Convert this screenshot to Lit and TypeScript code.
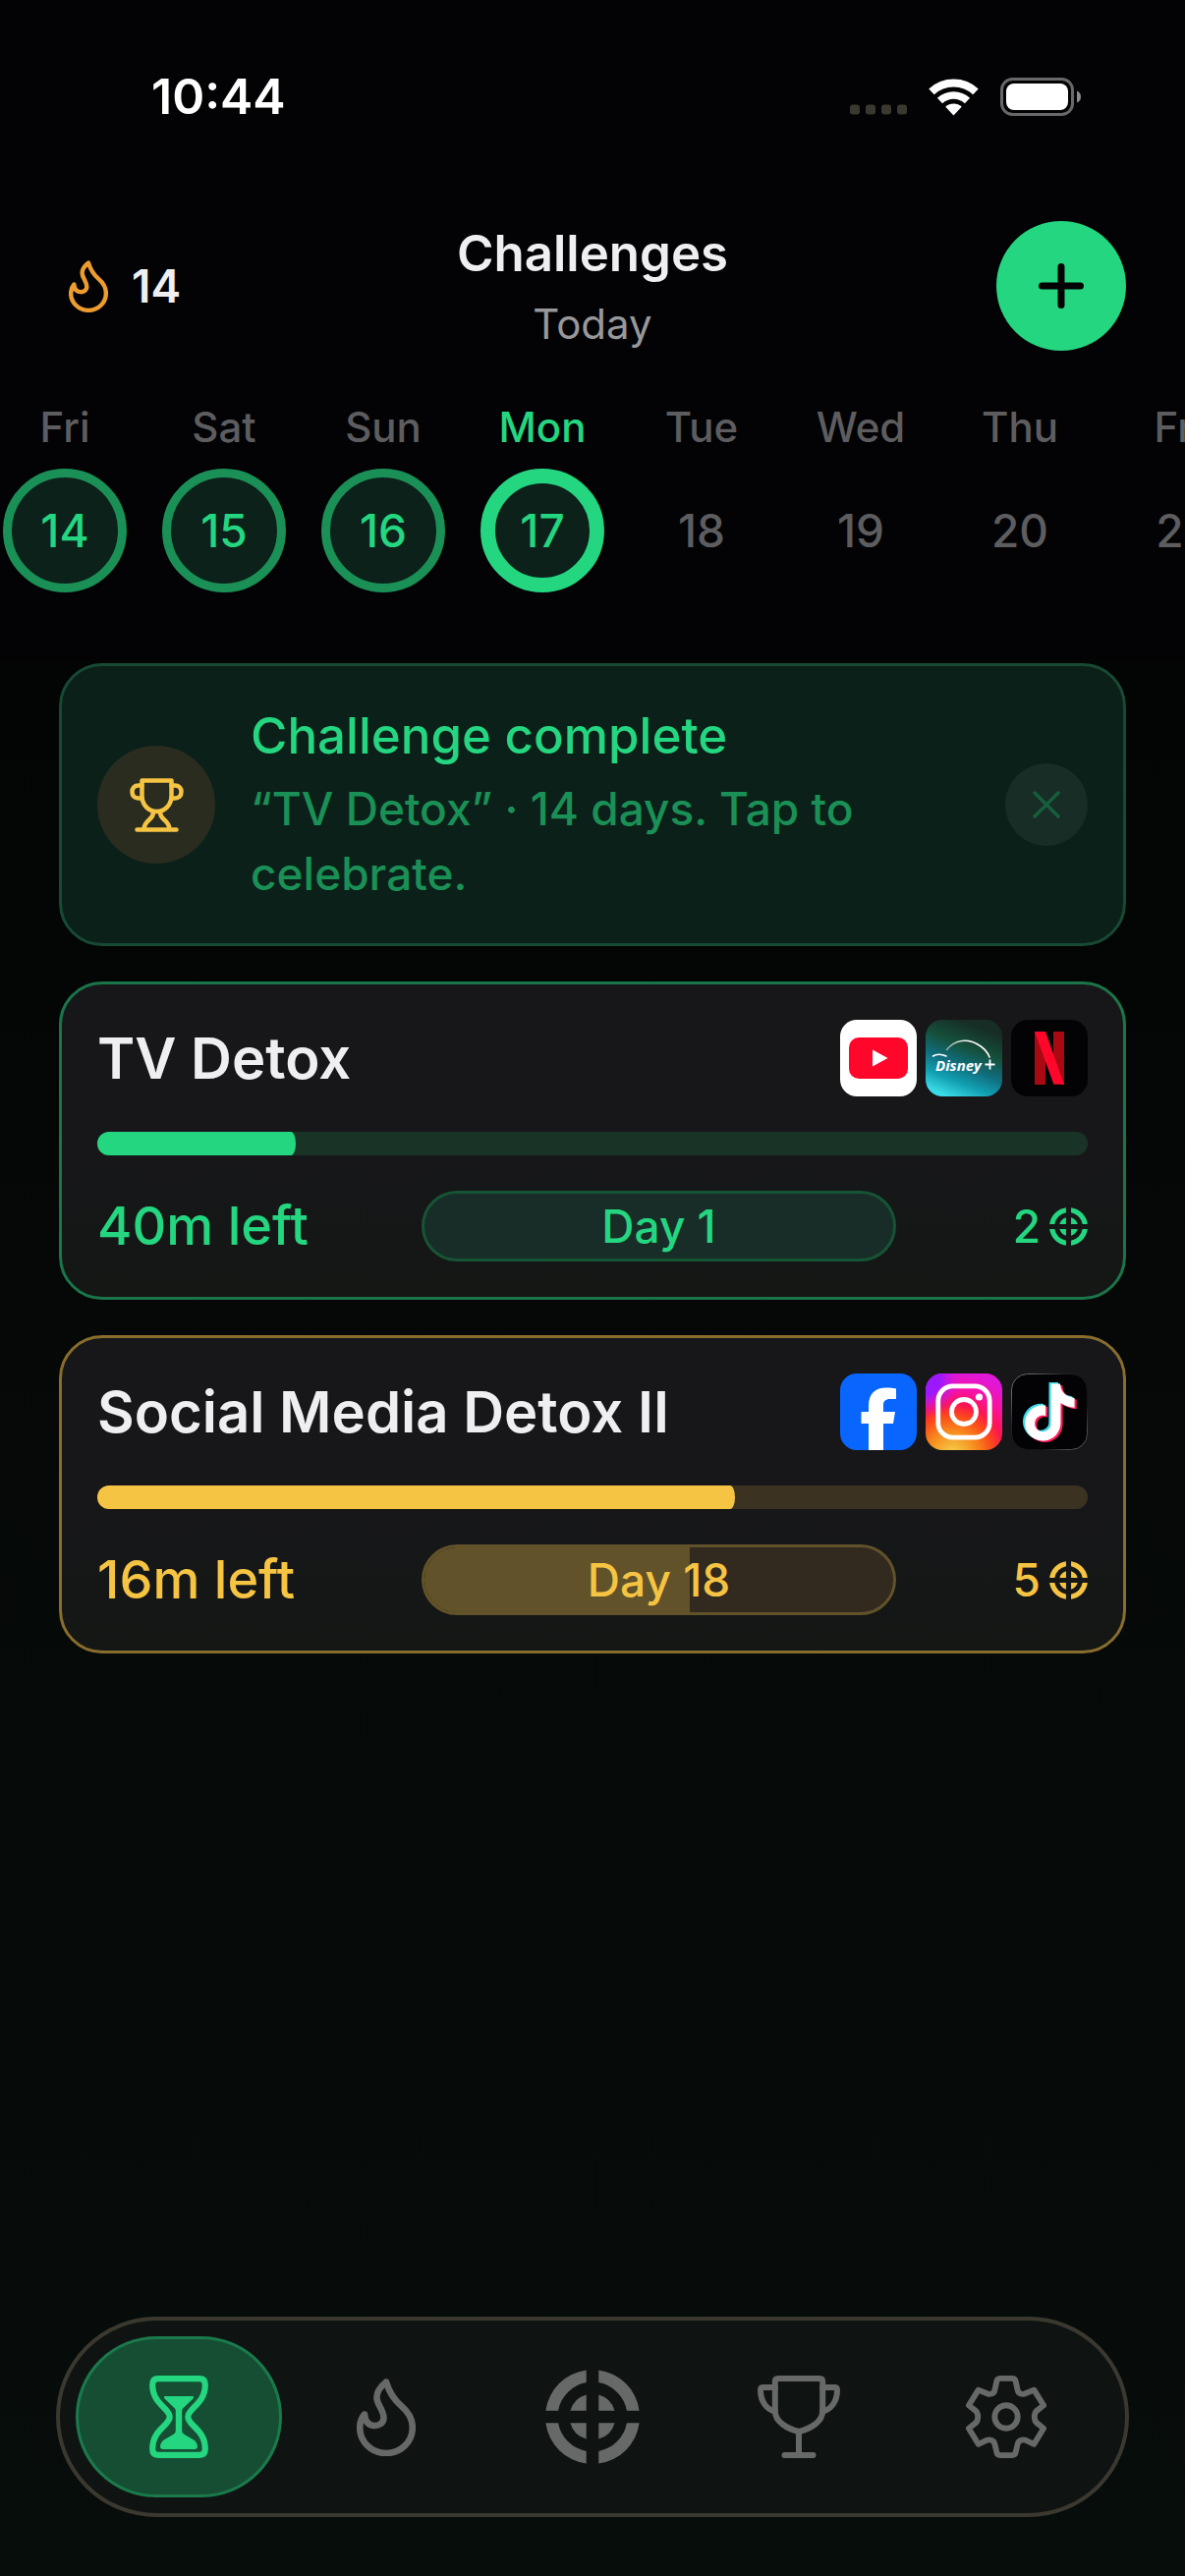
import { LitElement, html, svg, css, nothing } from "lit";
import { customElement, property, state } from "lit/decorators.js";
import { classMap } from "lit/directives/class-map.js";
import { styleMap } from "lit/directives/style-map.js";

/* ---------- icons ---------- */

const flameIcon = html`<svg class="glyph" viewBox="0 0 60 79" aria-hidden="true">
  <path
    d="M30 3.500C25 7.500 20 12.500 20.500 20C21 27 27.500 32 27.500 40C27.500 45.500 22.500 48.300 17.500 48C11.500 47.600 8.600 43 8 36.500C4.500 40.500 3.200 45 3.200 50C3.200 64.500 15 76 30 76C45 76 56.800 64.500 56.800 50C56.800 41 52 33.500 45.500 28C38 21.500 33 14 30 3.500Z"
    fill="none" stroke="currentColor" stroke-width="6.600" stroke-linejoin="round" />
</svg>`;

const quadrant =
  "M6.300 -47.600A48 48 0 0 1 47.600 -6.300H34.900A35.500 35.500 0 0 0 6.300 -34.900ZM6.300 -22.600A23.500 23.500 0 0 1 22.600 -6.300H6.300Z";

const targetIcon = html`<svg class="glyph" viewBox="-48 -48 96 96" aria-hidden="true">
  ${[0, 90, 180, 270].map(
    (a) => svg`<path d=${quadrant} transform="rotate(${a})" fill="currentColor" />`
  )}
</svg>`;

const hourglassIcon = html`<svg class="glyph" viewBox="0 0 60 84" aria-hidden="true">
  <path
    d="M9 3.200H51Q56.800 3.200 56.800 9.500C56.800 29 39.300 33 39.300 42S56.800 55 56.800 74.500Q56.800 80.800 51 80.800H9Q3.200 80.800 3.200 74.500C3.200 55 20.700 51 20.700 42S3.200 29 3.200 9.500Q3.200 3.200 9 3.200Z"
    fill="none" stroke="currentColor" stroke-width="6.200" />
  <path
    d="M16 21H44Q46 21 44.500 23.500L34 33.500Q33.200 34.300 33.200 36V56Q33.200 58 35 59.500L46 66Q49 69 49 72Q49 75 46 75H14Q11 75 11 72Q11 69 14 66L25 59.500Q26.800 58 26.800 56V36Q26.800 34.300 26 33.500L15.500 23.500Q14 21 16 21Z"
    fill="currentColor" />
</svg>`;

const cupIcon = html`<svg class="glyph" viewBox="0 0 84 84" aria-hidden="true">
  <g fill="none" stroke="currentColor" stroke-width="6" stroke-linecap="round" stroke-linejoin="round">
    <path d="M21 3H63Q66.200 3 66.200 6V36C66.200 47 54 54 42 57C30 54 17.800 47 17.800 36V6Q17.800 3 21 3Z" />
    <path d="M17.800 12H5Q3 12 3 15C3 26 9 34.500 17.800 36.500" />
    <path d="M66.200 12H79Q81 12 81 15C81 26 75 34.500 66.200 36.500" />
    <path d="M42 57V80M27.500 81H56.500" />
  </g>
</svg>`;

const gearIcon = html`<svg class="glyph" viewBox="0 0 84 86" aria-hidden="true">
  <g fill="none" stroke="currentColor" stroke-width="6" stroke-linejoin="round">
    <path
      d="M36 3H48Q51.500 3 52 6.500L54 15.500Q54.500 18 57 18.800Q60 20 62.500 18.500L71 15 81 31 73.500 37Q71.500 39 71.500 43Q71.500 47 73.500 49L81 55 71 71.500 62.500 67.500Q60 66.300 57 67.500Q54.500 68.500 54 71L52 79.500Q51.500 83 48 83H36Q32.500 83 32 79.500L30 71Q29.500 68.500 27 67.500Q24 66.300 21.500 67.500L13 71.500 3 55 10.500 49Q12.500 47 12.500 43Q12.500 39 10.500 37L3 31 13 15 21.500 18.500Q24 20 27 18.800Q29.500 18 30 15.500L32 6.500Q32.500 3 36 3Z" />
    <circle cx="42" cy="43" r="12" />
  </g>
</svg>`;

const awardIcon = html`<svg class="award" viewBox="0 0 55 55" aria-hidden="true">
  <g fill="none" stroke="currentColor" stroke-width="4.500" stroke-linecap="round" stroke-linejoin="round">
    <path d="M12.500 2.500H42.500V18C42.500 27 36 34 27.500 34S12.500 27 12.500 18Z" />
    <path d="M12.500 7.500H9C4.800 7.500 2.500 10 2.500 14S4.800 20.500 9 20.500H12.500" />
    <path d="M42.500 7.500H46C50.200 7.500 52.500 10 52.500 14S50.200 20.500 46 20.500H42.500" />
    <path d="M24 35C24 43 15 42 14.500 52M31 35C31 43 40 42 40.500 52M7.500 52.500H47.500" />
  </g>
</svg>`;

const plusIcon = html`<svg class="plus" viewBox="0 0 46 46" aria-hidden="true">
  <path d="M23 3.500V42.500M3.500 23H42.500" stroke="currentColor" stroke-width="7" stroke-linecap="round" />
</svg>`;

const closeIcon = html`<svg class="cross" viewBox="0 0 28 28" aria-hidden="true">
  <path d="M2 2L26 26M26 2L2 26" stroke="currentColor" stroke-width="3.500" stroke-linecap="round" />
</svg>`;

const notePath =
  "M12.525.02c1.31-.02 2.61-.01 3.91-.02.08 1.53.63 3.09 1.75 4.17 1.12 1.11 2.7 1.62 4.24 1.79v4.03c-1.44-.05-2.89-.35-4.2-.97-.57-.26-1.1-.59-1.62-.93-.01 2.92.01 5.84-.02 8.75-.08 1.4-.54 2.79-1.35 3.94-1.31 1.92-3.58 3.17-5.91 3.21-1.43.08-2.86-.31-4.08-1.03-2.02-1.19-3.44-3.37-3.65-5.71-.02-.5-.03-1-.01-1.49.18-1.9 1.12-3.72 2.58-4.96 1.66-1.44 3.98-2.13 6.15-1.72.02 1.48-.04 2.96-.04 4.44-.99-.32-2.15-.23-3.02.37-.63.41-1.11 1.04-1.36 1.75-.21.51-.15 1.07-.14 1.61.24 1.64 1.82 3.02 3.5 2.87 1.12-.01 2.19-.66 2.77-1.61.19-.33.4-.67.41-1.06.1-1.79.06-3.57.07-5.36.01-4.03-.01-8.05.02-12.07z";

const appLogos: Record<string, unknown> = {
  YouTube: html`<svg class="app" viewBox="0 0 78 78" role="img" aria-label="YouTube">
    <rect width="78" height="78" fill="#fff" />
    <rect x="9" y="18" width="60" height="42" rx="10" fill="#fe072b" />
    <path d="M33 30.500L48.500 39 33 47.500Z" fill="#fff" />
  </svg>`,
  Disney: html`<svg class="app" viewBox="0 0 78 78" role="img" aria-label="Disney+">
    <defs>
      <linearGradient id="sea" x1="0.7" y1="0" x2="0.3" y2="1">
        <stop offset="0.080" stop-color="#172d26" />
        <stop offset="0.350" stop-color="#154f3a" />
        <stop offset="0.600" stop-color="#106f80" />
        <stop offset="0.800" stop-color="#11a0b2" />
        <stop offset="1" stop-color="#3adbe8" />
      </linearGradient>
      <linearGradient id="trail" x1="0" x2="1">
        <stop offset="0" stop-color="#fff" stop-opacity="0.500" />
        <stop offset="0.500" stop-color="#fff" />
      </linearGradient>
    </defs>
    <rect width="78" height="78" fill="url(#sea)" />
    <path d="M21.500 30.500C30 20 43 19 53 25Q62 30 65 38" fill="none" stroke="url(#trail)" stroke-width="1.600" stroke-linecap="round" />
    <path d="M7.500 37Q13 33.500 21 37" fill="none" stroke="#fff" stroke-width="1.600" stroke-linecap="round" />
    <text x="10" y="51.500" class="wordmark" fill="#fff">Disney</text>
    <path d="M60.500 45.500H70.500M65.500 40.500V50.500" stroke="#fff" stroke-width="1.800" />
  </svg>`,
  Netflix: html`<svg class="app" viewBox="0 0 78 78" role="img" aria-label="Netflix">
    <rect width="78" height="78" fill="#030305" />
    <rect x="24" y="12" width="11" height="54" fill="#a90912" />
    <rect x="43" y="12" width="11" height="54" fill="#a90912" />
    <path d="M24 12H35L54 66Q49 65 43 64.800Z" fill="#fe072b" />
  </svg>`,
  Facebook: html`<svg class="app" viewBox="0 0 78 78" role="img" aria-label="Facebook">
    <rect width="78" height="78" fill="#0866ff" />
    <path
      d="M29 78V51H21.500V39H29V33C29 20 36 14.500 47 14.500C51 14.500 54 14.800 57 15.500V26H51C46 26 44 28.500 44 32V39H56L54 51H44V78Z"
      fill="#fff" />
  </svg>`,
  Instagram: html`<svg class="app" viewBox="0 0 78 78" role="img" aria-label="Instagram">
    <defs>
      <radialGradient id="warm" cx="0.350" cy="1.080" r="1.100">
        <stop offset="0.080" stop-color="#f5c542" />
        <stop offset="0.300" stop-color="#f78a1c" />
        <stop offset="0.480" stop-color="#fb4a1a" />
        <stop offset="0.620" stop-color="#fd1550" />
        <stop offset="0.780" stop-color="#f912a0" />
        <stop offset="1" stop-color="#e018d8" />
      </radialGradient>
      <radialGradient id="cool" cx="0" cy="0.080" r="0.480">
        <stop offset="0.400" stop-color="#9c18ff" />
        <stop offset="1" stop-color="#d818e0" stop-opacity="0" />
      </radialGradient>
    </defs>
    <rect width="78" height="78" fill="url(#warm)" />
    <rect width="78" height="78" fill="url(#cool)" />
    <g fill="none" stroke="#fff">
      <rect x="12.800" y="12.800" width="52.400" height="52.400" rx="15" stroke-width="4.800" />
      <circle cx="39" cy="39" r="12.500" stroke-width="4.800" />
    </g>
    <circle cx="54.500" cy="24" r="3.600" fill="#fff" />
  </svg>`,
  TikTok: html`<svg class="app" viewBox="0 0 78 78" role="img" aria-label="TikTok">
    <defs>
      <linearGradient id="edge" x1="0" y1="0" x2="1" y2="1">
        <stop offset="0" stop-color="#8a8a8c" />
        <stop offset="0.350" stop-color="#222224" />
        <stop offset="0.700" stop-color="#111113" />
        <stop offset="1" stop-color="#77777a" />
      </linearGradient>
    </defs>
    <rect x="0.500" y="0.500" width="77" height="77" rx="16" fill="#030305" stroke="url(#edge)" />
    <path d=${notePath} transform="translate(8.200 9) scale(2.420)" fill="#3adbe8" />
    <path d=${notePath} transform="translate(12.400 12) scale(2.420)" fill="#fe1b5a" />
    <path d=${notePath} transform="translate(10.300 10.500) scale(2.420)" fill="#fff" />
  </svg>`,
};

/* ---------- challenge card ---------- */

interface Challenge {
  name: string;
  tone: "green" | "gold";
  apps: string[];
  left: string;
  progress: number;
  day: number;
  dayProgress: number;
  points: number;
}

@customElement("challenge-card")
export class ChallengeCard extends LitElement {
  @property({ attribute: false }) challenge!: Challenge;

  static styles = css`
    :host {
      display: block;
    }
    .card {
      --tone: #24d680;
      --edge: #1a754a;
      --track: #193427;
      --pill: #182d27;
      --pill-edge: #165436;
      --pill-fill: #165436;
      display: flex;
      flex-direction: column;
      gap: 36px;
      padding: 36px;
      border: 3px solid var(--edge);
      border-radius: 44px;
      background: linear-gradient(#17171a 50%, #141714);
      color: var(--tone);
    }
    .card.gold {
      --tone: #f6c443;
      --edge: #896d2d;
      --track: #3b3222;
      --pill: #32291f;
      --pill-edge: #615229;
      --pill-fill: #615229;
    }
    .top {
      display: flex;
      align-items: center;
      justify-content: space-between;
      gap: 24px;
    }
    .name {
      margin: 0;
      font-size: 58px;
      line-height: 72px;
      font-weight: 600;
      color: #efeff1;
    }
    .apps {
      display: flex;
      gap: 9px;
    }
    .app {
      display: block;
      width: 78px;
      height: 78px;
      border-radius: 17px;
    }
    .wordmark {
      font: italic 700 15px "Open Sans", sans-serif;
    }
    .track {
      height: 24px;
      border-radius: 12px;
      overflow: hidden;
      background: var(--track);
    }
    .bar {
      height: 100%;
      border-radius: 0 5px 5px 0 / 0 12px 12px 0;
      background: var(--tone);
    }
    .bottom {
      display: grid;
      grid-template-columns: 330fr 483fr 195fr;
      align-items: center;
    }
    .left {
      font-size: 54px;
      line-height: 60px;
      font-weight: 500;
    }
    .day {
      position: relative;
      overflow: hidden;
      border: 3px solid var(--pill-edge);
      border-radius: 36px;
      background: var(--pill);
      text-align: center;
      font-size: 46px;
      line-height: 66px;
      font-weight: 500;
    }
    .day-fill {
      position: absolute;
      inset: 0 auto 0 0;
      background: var(--pill-fill);
    }
    .day-text {
      position: relative;
    }
    .points {
      display: flex;
      align-items: center;
      justify-content: flex-end;
      gap: 9px;
      font-size: 46px;
      line-height: 60px;
      font-weight: 500;
    }
    .glyph {
      display: block;
      width: 39px;
      height: 39px;
    }
  `;

  render() {
    const c = this.challenge;
    return html`<article class="card ${c.tone}">
      <div class="top">
        <h2 class="name">${c.name}</h2>
        <div class="apps">${c.apps.map((a) => appLogos[a])}</div>
      </div>
      <div class="track" role="progressbar" aria-label="Time left" aria-valuenow=${c.progress} aria-valuemin="0" aria-valuemax="100">
        <div class="bar" style=${styleMap({ width: `${c.progress}%` })}></div>
      </div>
      <div class="bottom">
        <span class="left">${c.left}</span>
        <div class="day">
          ${c.dayProgress > 0
            ? html`<div class="day-fill" style=${styleMap({ width: `${c.dayProgress}%` })}></div>`
            : nothing}
          <span class="day-text">Day ${c.day}</span>
        </div>
        <div class="points"><span>${c.points}</span>${targetIcon}</div>
      </div>
    </article>`;
  }
}

/* ---------- app ---------- */

interface Day {
  name: string;
  date: number;
  status: "done" | "today" | "future";
}

@customElement("app-root")
export class AppRoot extends LitElement {
  @state() private bannerOpen = true;

  private days: Day[] = [
    { name: "Fri", date: 14, status: "done" },
    { name: "Sat", date: 15, status: "done" },
    { name: "Sun", date: 16, status: "done" },
    { name: "Mon", date: 17, status: "today" },
    { name: "Tue", date: 18, status: "future" },
    { name: "Wed", date: 19, status: "future" },
    { name: "Thu", date: 20, status: "future" },
    { name: "Fri", date: 21, status: "future" },
  ];

  private challenges: Challenge[] = [
    {
      name: "TV Detox",
      tone: "green",
      apps: ["YouTube", "Disney", "Netflix"],
      left: "40m left",
      progress: 20,
      day: 1,
      dayProgress: 0,
      points: 2,
    },
    {
      name: "Social Media Detox II",
      tone: "gold",
      apps: ["Facebook", "Instagram", "TikTok"],
      left: "16m left",
      progress: 64.4,
      day: 18,
      dayProgress: 56.6,
      points: 5,
    },
  ];

  private tabs = [
    { label: "Challenges", id: "challenges", icon: hourglassIcon },
    { label: "Streak", id: "streak", icon: flameIcon },
    { label: "Focus", id: "focus", icon: targetIcon },
    { label: "Awards", id: "awards", icon: cupIcon },
    { label: "Settings", id: "settings", icon: gearIcon },
  ];

  static styles = css`
    :host {
      display: flex;
      flex-direction: column;
      min-height: 100vh;
      overflow: hidden;
      box-sizing: border-box;
      background: linear-gradient(#030404 25%, #050807 50%, #070d0b);
      color: #efeff1;
      font-family: Inter, "Liberation Sans", sans-serif;
    }
    .head {
      padding-bottom: 69px;
      background: #030305;
    }
    .status {
      display: flex;
      align-items: center;
      justify-content: space-between;
      padding: 68px 106px 91px 154px;
    }
    .clock {
      font-size: 50px;
      line-height: 60px;
      font-weight: 600;
      color: #fff;
    }
    .signals {
      display: flex;
      align-items: center;
      gap: 22px;
    }
    .signals svg {
      display: block;
      height: 39px;
    }
    .dots {
      width: 58px;
    }
    .wifi {
      width: 51px;
    }
    .battery {
      width: 82px;
    }
    .bar {
      display: grid;
      grid-template-columns: 1fr auto 1fr;
      align-items: center;
      padding: 0 60px;
    }
    .streak {
      display: flex;
      align-items: center;
      gap: 24px;
      padding-left: 10px;
      font-size: 46px;
      line-height: 60px;
      font-weight: 600;
    }
    .streak .glyph {
      display: block;
      width: 40px;
      height: 53px;
      color: #ed9d2d;
    }
    .titles {
      text-align: center;
    }
    .title {
      margin: 0;
      font-size: 51px;
      line-height: 78px;
      font-weight: 600;
    }
    .subtitle {
      margin: 0;
      font-size: 42px;
      line-height: 66px;
      color: #98989b;
    }
    button {
      display: grid;
      place-items: center;
      padding: 0;
      border: 0;
      border-radius: 50%;
      font: inherit;
      cursor: pointer;
    }
    .add {
      justify-self: end;
      width: 132px;
      height: 132px;
      background: #24d680;
      color: #030305;
    }
    .plus {
      width: 46px;
      height: 46px;
    }
    .week {
      display: flex;
      gap: 36px;
      margin: 42px 0 0;
      padding: 0 0 0 3px;
      list-style: none;
      overflow: hidden;
    }
    .day {
      flex: 0 0 126px;
      display: flex;
      flex-direction: column;
      align-items: center;
      gap: 12px;
      color: #5d5d5f;
      font-weight: 500;
    }
    .day-name {
      font-size: 42px;
      line-height: 60px;
    }
    .day-date {
      box-sizing: border-box;
      display: grid;
      place-items: center;
      width: 126px;
      height: 126px;
      border: 9px solid transparent;
      border-radius: 50%;
      font-size: 46px;
      line-height: 60px;
    }
    .done .day-date {
      border-color: #1a9056;
      background: #0b2119;
      color: #24d680;
    }
    .today {
      color: #24d680;
    }
    .today .day-date {
      border-width: 15px;
      border-color: #24d680;
      background: #0b2119;
    }
    .list {
      display: flex;
      flex-direction: column;
      gap: 36px;
      padding: 3px 60px 60px;
    }
    .banner {
      display: flex;
      align-items: center;
      gap: 36px;
      padding: 38px 36px;
      border: 3px solid #174a34;
      border-radius: 44px;
      background: #0b2018;
    }
    .medal {
      flex: none;
      display: grid;
      place-items: center;
      width: 120px;
      height: 120px;
      border-radius: 50%;
      background: #2a2c20;
      color: #f6c443;
    }
    .award {
      width: 55px;
      height: 55px;
    }
    .message {
      flex: 1;
      display: flex;
      flex-direction: column;
      gap: 8px;
      font-weight: 500;
    }
    .message-title {
      margin: 0;
      font-size: 51px;
      line-height: 66px;
      font-weight: 500;
      color: #24d680;
    }
    .message-text {
      margin: 0;
      font-size: 46px;
      line-height: 66px;
      color: #1a9056;
    }
    .dismiss {
      flex: none;
      width: 84px;
      height: 84px;
      background: #182d26;
      color: #165f3c;
    }
    .cross {
      width: 28px;
      height: 28px;
    }
    .tabs {
      display: grid;
      grid-template-columns: repeat(5, 1fr);
      margin: auto 57px 60px;
      padding: 16px;
      border: 4px solid #3b392f;
      border-radius: 102px;
      background: #0f1412;
    }
    .tab {
      box-sizing: border-box;
      display: grid;
      place-items: center;
      height: 164px;
      border: 3px solid transparent;
      border-radius: 82px;
      color: #676968;
    }
    .tab.active {
      border-color: #1a7a4c;
      background: #154e33;
      color: #24d680;
    }
    .tab .glyph {
      display: block;
      height: 84px;
    }
    .tab.streak-tab .glyph {
      height: 79px;
    }
    .tab.focus-tab .glyph {
      height: 96px;
    }
  `;

  render() {
    return html`
      <header class="head">
        <div class="status">
          <span class="clock">10:44</span>
          <div class="signals">
            <svg class="dots" viewBox="0 0 58 39" aria-hidden="true">
              ${[0, 16, 32, 48].map((x) => svg`<rect x=${x} y="27.500" width="10" height="10" rx="3" fill="#3b392f" />`)}
            </svg>
            <svg class="wifi" viewBox="0 0 51 39" aria-hidden="true">
              <g fill="none" stroke="#fff">
                <path d="M3 14.400A33 33 0 0 1 48 14.400" stroke-width="8" />
                <path d="M11.500 23.500A20.500 20.500 0 0 1 39.500 23.500" stroke-width="7.600" />
              </g>
              <path d="M25.500 38.500L17.300 29.700A12 12 0 0 1 33.700 29.700Z" fill="#fff" />
            </svg>
            <svg class="battery" viewBox="0 0 82 39" aria-hidden="true">
              <rect x="1.500" y="1.500" width="72" height="36" rx="11" fill="none" stroke="#676968" stroke-width="3" />
              <rect x="6" y="6" width="63" height="27" rx="8" fill="#fff" />
              <path d="M78 13.500Q82 15 82 19.500T78 25.500Z" fill="#8a8a8c" />
            </svg>
          </div>
        </div>

        <div class="bar">
          <div class="streak">${flameIcon}<span>14</span></div>
          <div class="titles">
            <h1 class="title">Challenges</h1>
            <p class="subtitle">Today</p>
          </div>
          <button class="add" aria-label="Add challenge">${plusIcon}</button>
        </div>

        <ol class="week">
          ${this.days.map(
            (d) => html`<li class="day ${d.status}">
              <span class="day-name">${d.name}</span>
              <span class="day-date">${d.date}</span>
            </li>`
          )}
        </ol>
      </header>

      <main class="list">
        ${this.bannerOpen
          ? html`<section class="banner">
              <div class="medal">${awardIcon}</div>
              <div class="message">
                <h2 class="message-title">Challenge complete</h2>
                <p class="message-text">“TV Detox” · 14 days. Tap to celebrate.</p>
              </div>
              <button class="dismiss" aria-label="Dismiss" @click=${() => (this.bannerOpen = false)}>${closeIcon}</button>
            </section>`
          : nothing}
        ${this.challenges.map((c) => html`<challenge-card .challenge=${c}></challenge-card>`)}
      </main>

      <nav class="tabs" aria-label="Main">
        ${this.tabs.map(
          (t, i) => html`<a
            class=${classMap({ tab: true, active: i === 0, [`${t.id}-tab`]: true })}
            href="#${t.id}"
            aria-label=${t.label}
            >${t.icon}</a
          >`
        )}
      </nav>
    `;
  }
}
